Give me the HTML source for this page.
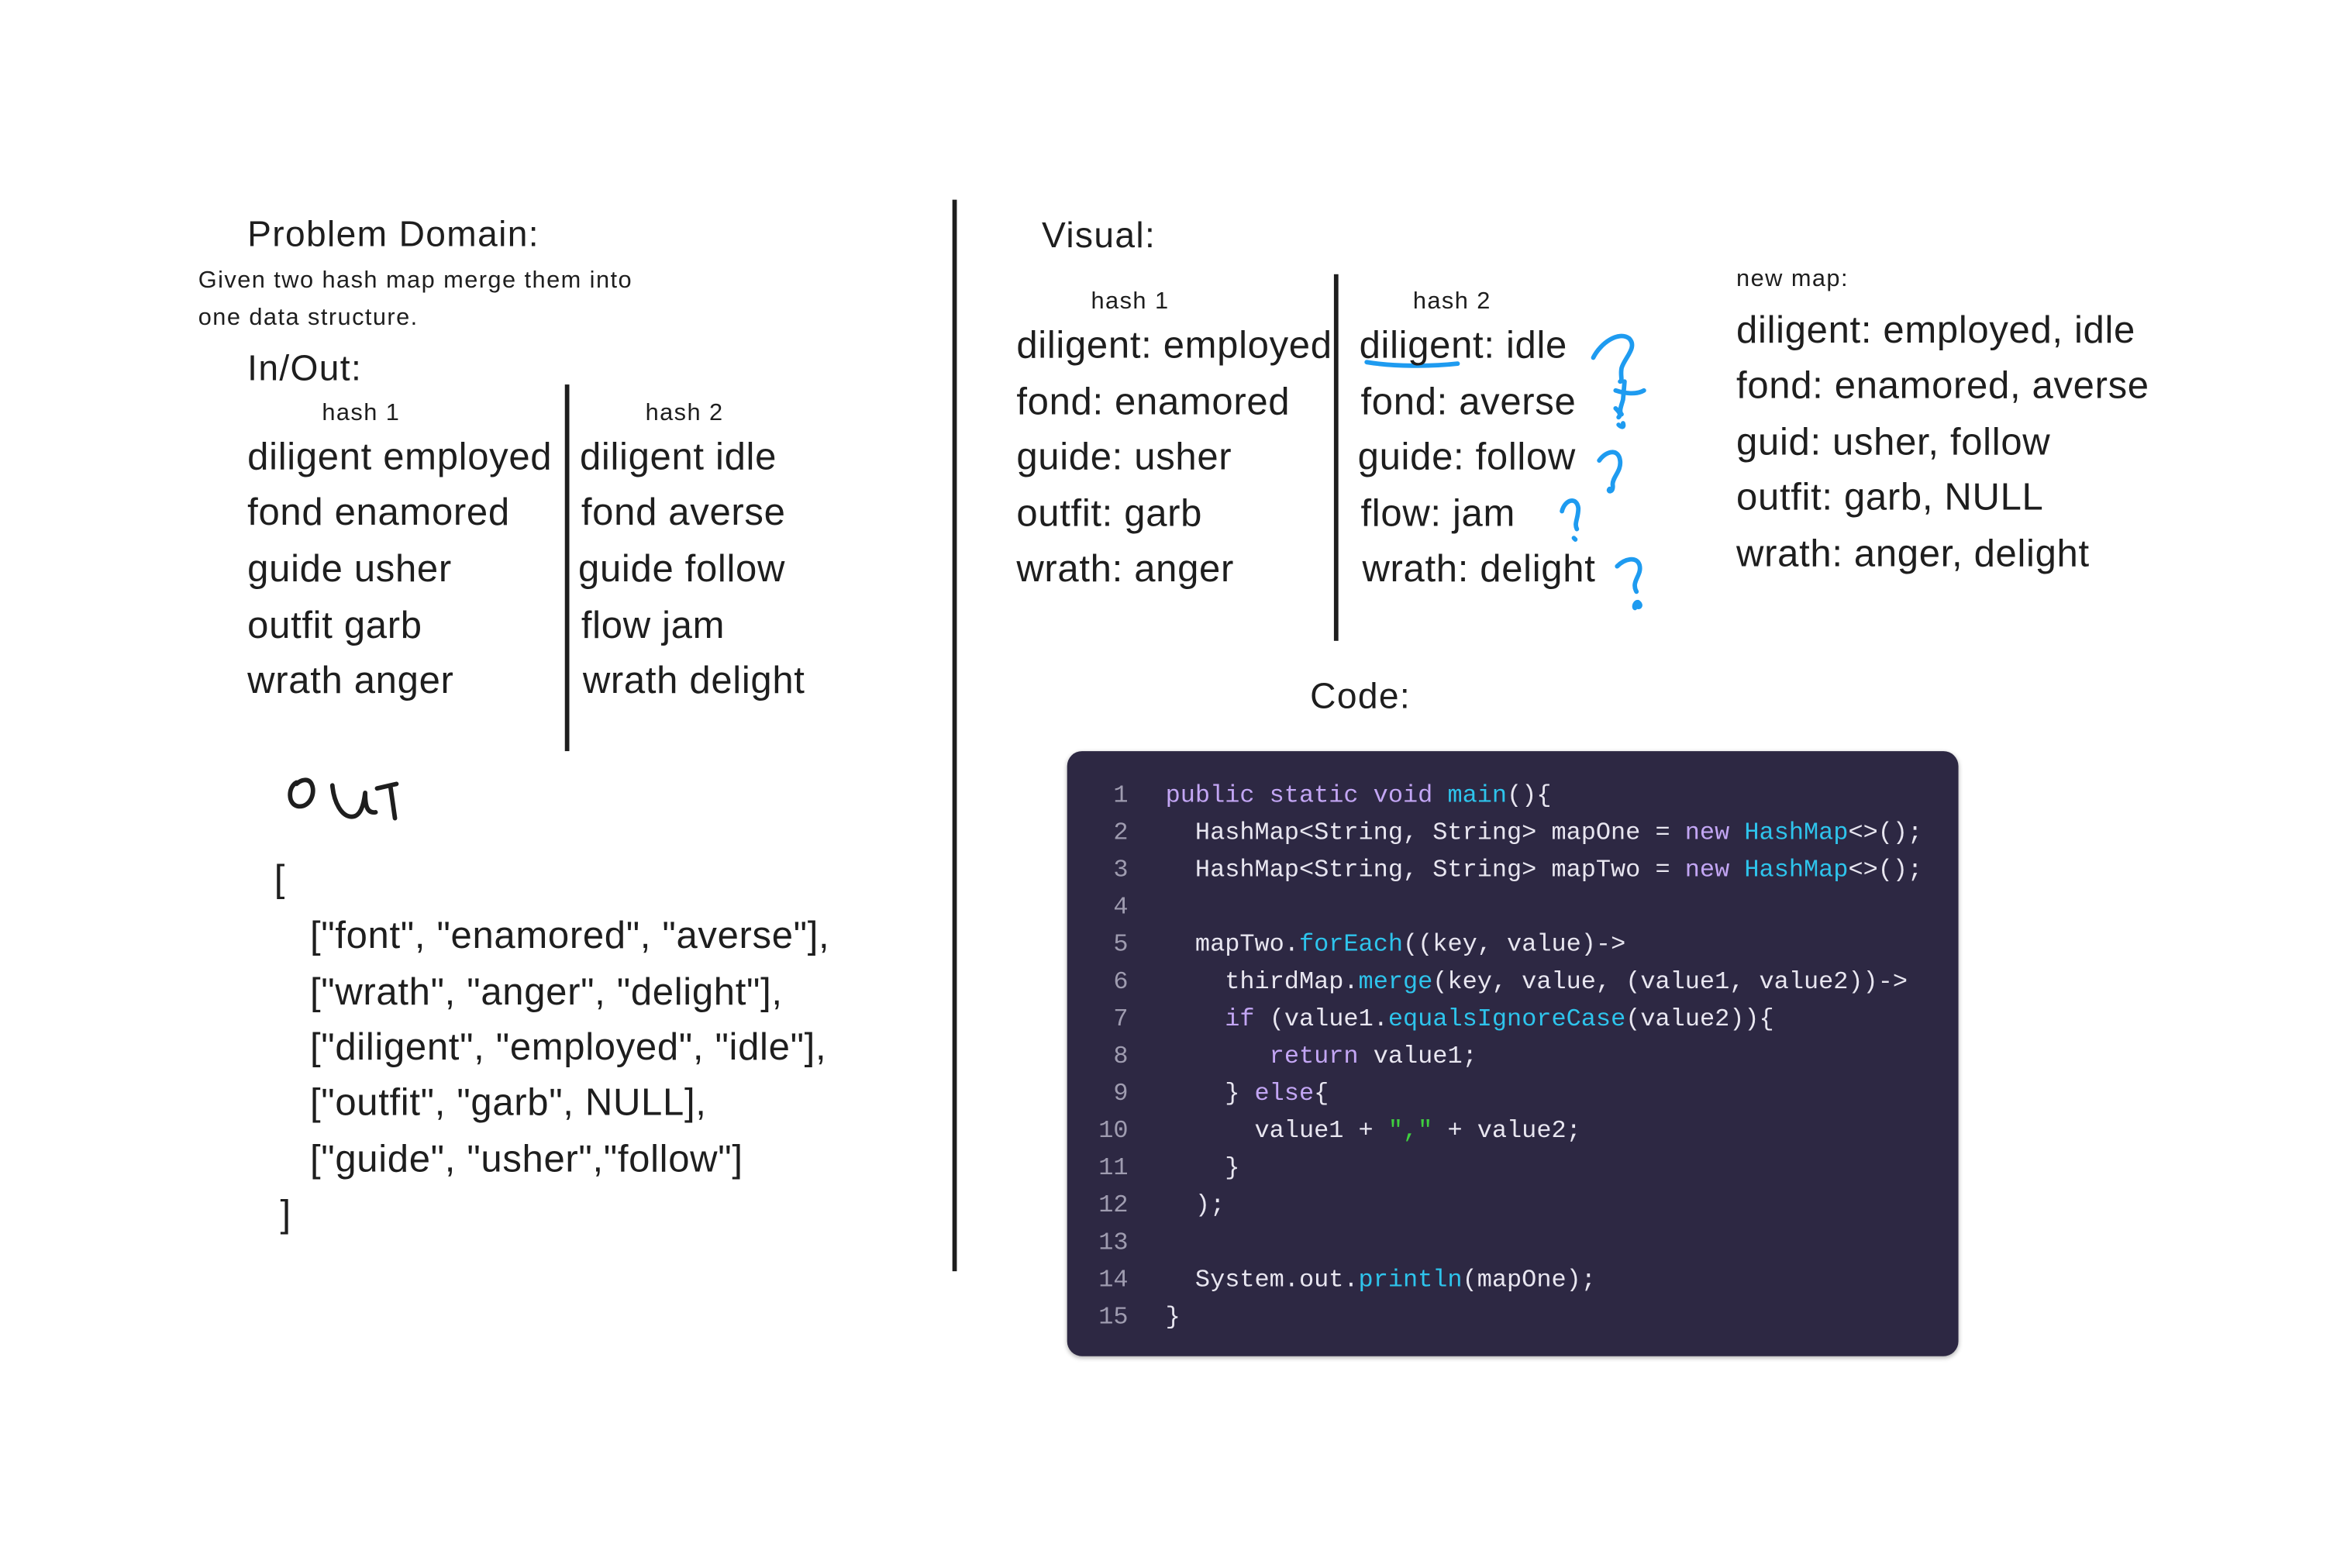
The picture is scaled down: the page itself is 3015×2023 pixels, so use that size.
<!DOCTYPE html>
<html><head><meta charset="utf-8">
<style>
html,body{margin:0;padding:0;background:#fff;}
body{width:3015px;height:2023px;overflow:hidden;position:relative;}
#w{position:absolute;left:0;top:0;width:1568px;height:1052px;transform:scale(1.9228);transform-origin:0 0;font-family:"Liberation Sans",sans-serif;color:#1e1e1e;}
.t{position:absolute;white-space:nowrap;line-height:1;}
.h{font-size:24px;letter-spacing:0.7px;}
.s{font-size:16px;letter-spacing:0.75px;}
.b{font-size:25.5px;letter-spacing:0.35px;}
.v{position:absolute;background:#1e1e1e;width:3px;}
#code{position:absolute;left:716px;top:504px;width:598px;height:406px;background:#2d2843;border-radius:10px;box-shadow:0 1px 3px rgba(0,0,0,.3);}
.cl{position:absolute;left:0;height:25px;line-height:25px;font-family:"Liberation Mono",monospace;font-size:16.6px;color:#e8e6f0;white-space:pre;}
.n{display:inline-block;width:41px;text-align:right;color:#9f9cb0;margin-right:25px;}
.k{color:#c3a6f4}.f{color:#2ec4ec}.g{color:#3fcf3f}
</style></head><body><div id="w">
<div class="t h" style="left:166px;top:146px">Problem Domain:</div>
<div class="t s" style="left:133px;top:181px">Given two hash map merge them into</div>
<div class="t s" style="left:133px;top:206px">one data structure.</div>
<div class="t h" style="left:166px;top:236px">In/Out:</div>
<div class="t s" style="left:216px;top:270px">hash 1</div>
<div class="t s" style="left:433px;top:270px">hash 2</div>
<div class="t b" style="left:166px;top:295px">diligent employed</div>
<div class="t b" style="left:166px;top:332px">fond enamored</div>
<div class="t b" style="left:166px;top:370px">guide usher</div>
<div class="t b" style="left:166px;top:408px">outfit garb</div>
<div class="t b" style="left:166px;top:445px">wrath anger</div>
<div class="t b" style="left:389px;top:295px">diligent idle</div>
<div class="t b" style="left:390px;top:332px">fond averse</div>
<div class="t b" style="left:388px;top:370px">guide follow</div>
<div class="t b" style="left:390px;top:408px">flow jam</div>
<div class="t b" style="left:391px;top:445px">wrath delight</div>
<div class="v" style="left:379px;top:258px;height:246px"></div>
<div class="t b" style="left:184px;top:578px">[</div>
<div class="t b" style="left:208px;top:616px">["font", "enamored", "averse"],</div>
<div class="t b" style="left:208px;top:654px">["wrath", "anger", "delight"],</div>
<div class="t b" style="left:208px;top:691px">["diligent", "employed", "idle"],</div>
<div class="t b" style="left:208px;top:728px">["outfit", "garb", NULL],</div>
<div class="t b" style="left:208px;top:766px">["guide", "usher","follow"]</div>
<div class="t b" style="left:188px;top:803px">]</div>
<svg style="position:absolute;left:0;top:0" width="1568" height="1052" fill="none" stroke-linecap="round" stroke-linejoin="round">
<g stroke="#1e1e1e" stroke-width="3">
<path d="M199 525 C193 528 193 540 200 541 C208 542 212 532 209 526 C207 522 202 523 199 526"/>
<path d="M223 527 C224 538 229 548 236 548 C242 548 244 540 245 532 C245 540 246 546 252 545"/>
<path d="M253 529 L266 526 M262 528 L265 549"/>
</g>
<g stroke="#1e9bf0" stroke-width="3">
<path d="M917 243 C935 246 960 246 978 244"/>
<path d="M1069 240 C1074 230 1086 222 1093 227 C1099 233 1090 240 1088 247 C1087 252 1089 256 1087 256"/>
<path d="M1084 262 C1090 264 1098 265 1103 262 M1090 256 L1089 268 C1088 272 1086 276 1088 278 M1084 274 C1086 276 1088 278 1086 280 M1086 285 C1088 287 1090 287 1089 284"/>
<path d="M1073 309 C1078 302 1086 301 1087 309 C1088 316 1082 320 1082 325 C1083 331 1078 330 1080 328"/>
<path d="M1048 343 C1050 335 1058 333 1059 341 C1059 348 1056 351 1058 355 M1056 361 L1057 362"/>
<path d="M1085 380 C1090 375 1098 373 1100 379 C1102 386 1094 390 1098 397 M1097 406 C1100 409 1102 406 1099 404 C1097 404 1096 407 1097 408"/>
</g>
</svg>
<div class="v" style="left:639px;top:134px;height:719px"></div>
<div class="t h" style="left:699px;top:147px">Visual:</div>
<div class="t s" style="left:732px;top:195px">hash 1</div>
<div class="t s" style="left:948px;top:195px">hash 2</div>
<div class="t b" style="left:682px;top:220px">diligent: employed</div>
<div class="t b" style="left:682px;top:258px">fond: enamored</div>
<div class="t b" style="left:682px;top:295px">guide: usher</div>
<div class="t b" style="left:682px;top:333px">outfit: garb</div>
<div class="t b" style="left:682px;top:370px">wrath: anger</div>
<div class="t b" style="left:912px;top:220px">diligent: idle</div>
<div class="t b" style="left:913px;top:258px">fond: averse</div>
<div class="t b" style="left:911px;top:295px">guide: follow</div>
<div class="t b" style="left:913px;top:333px">flow: jam</div>
<div class="t b" style="left:914px;top:370px">wrath: delight</div>
<div class="v" style="left:895px;top:184px;height:246px"></div>
<div class="t s" style="left:1165px;top:180px">new map:</div>
<div class="t b" style="left:1165px;top:210px">diligent: employed, idle</div>
<div class="t b" style="left:1165px;top:247px">fond: enamored, averse</div>
<div class="t b" style="left:1165px;top:285px">guid: usher, follow</div>
<div class="t b" style="left:1165px;top:322px">outfit: garb, NULL</div>
<div class="t b" style="left:1165px;top:360px">wrath: anger, delight</div>
<div class="t h" style="left:879px;top:456px">Code:</div>
<div id="code">
<div class="cl" style="top:17px"><span class="n">1</span><span class="k">public static void</span> <span class="f">main</span>(){</div>
<div class="cl" style="top:42px"><span class="n">2</span>  HashMap&lt;String, String&gt; mapOne = <span class="k">new</span> <span class="f">HashMap</span>&lt;&gt;();</div>
<div class="cl" style="top:67px"><span class="n">3</span>  HashMap&lt;String, String&gt; mapTwo = <span class="k">new</span> <span class="f">HashMap</span>&lt;&gt;();</div>
<div class="cl" style="top:92px"><span class="n">4</span></div>
<div class="cl" style="top:117px"><span class="n">5</span>  mapTwo.<span class="f">forEach</span>((key, value)-&gt;</div>
<div class="cl" style="top:142px"><span class="n">6</span>    thirdMap.<span class="f">merge</span>(key, value, (value1, value2))-&gt;</div>
<div class="cl" style="top:167px"><span class="n">7</span>    <span class="k">if</span> (value1.<span class="f">equalsIgnoreCase</span>(value2)){</div>
<div class="cl" style="top:192px"><span class="n">8</span>       <span class="k">return</span> value1;</div>
<div class="cl" style="top:217px"><span class="n">9</span>    } <span class="k">else</span>{</div>
<div class="cl" style="top:242px"><span class="n">10</span>      value1 + <span class="g">","</span> + value2;</div>
<div class="cl" style="top:267px"><span class="n">11</span>    }</div>
<div class="cl" style="top:292px"><span class="n">12</span>  );</div>
<div class="cl" style="top:317px"><span class="n">13</span></div>
<div class="cl" style="top:342px"><span class="n">14</span>  System.out.<span class="f">println</span>(mapOne);</div>
<div class="cl" style="top:367px"><span class="n">15</span>}</div>
</div>
</div></body></html>
